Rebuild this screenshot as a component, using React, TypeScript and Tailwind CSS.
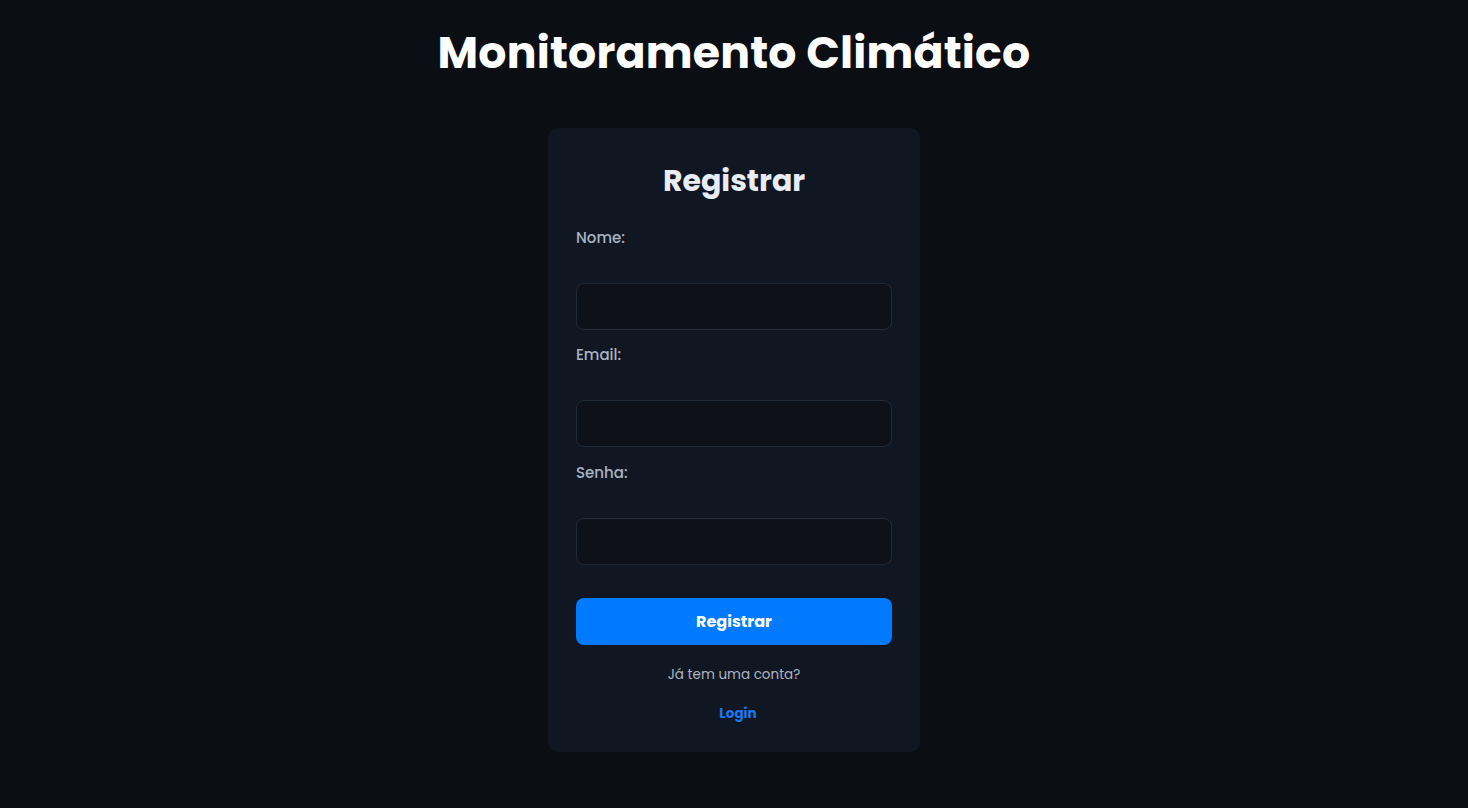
export default function App() {
  return (
    <div
      className="min-h-screen w-full bg-[#0b0e13] text-white flex flex-col items-center"
      style={{ fontFamily: '"Poppins", Inter, "Noto Sans", sans-serif' }}
    >
      <h1 className="mt-[24px] text-[44.2px] leading-[58px] font-bold tracking-[0.2px] text-white">
        Monitoramento Climático
      </h1>

      <form className="mt-[46px] w-[372px] rounded-[10px] bg-[#111722] px-[28px] pt-[32px] pb-[27px] flex flex-col">
        <h2 className="text-center text-[30px] leading-[42px] font-bold text-[#e8edf5]">Registrar</h2>

        <label className="mt-[26px] text-[15px] leading-[20px] font-medium text-[#a9b3c4]">Nome:</label>
        <input
          type="text"
          className="mt-[35px] h-[47px] w-full rounded-[8px] border border-[#232a37] bg-[#0e1119] px-3 text-white outline-none"
        />

        <label className="mt-[15px] text-[15px] leading-[20px] font-medium text-[#a9b3c4]">Email:</label>
        <input
          type="email"
          className="mt-[35px] h-[47px] w-full rounded-[8px] border border-[#232a37] bg-[#0e1119] px-3 text-white outline-none"
        />

        <label className="mt-[16px] text-[15px] leading-[20px] font-medium text-[#a9b3c4]">Senha:</label>
        <input
          type="password"
          className="mt-[35px] h-[47px] w-full rounded-[8px] border border-[#232a37] bg-[#0e1119] px-3 text-white outline-none"
        />

        <button
          type="button"
          className="mt-[33px] h-[47px] w-full rounded-[8px] bg-[#007bff] text-[16px] font-bold text-white"
        >
          Registrar
        </button>

        <p className="mt-[19px] text-center text-[13.5px] leading-[22px] text-[#aeb5c0]">Já tem uma conta?</p>
        <a href="#" className="mt-[17px] self-center pl-[8px] text-[13.5px] leading-[22px] font-bold text-[#1a78f0]">
          Login
        </a>
      </form>
    </div>
  );
}
